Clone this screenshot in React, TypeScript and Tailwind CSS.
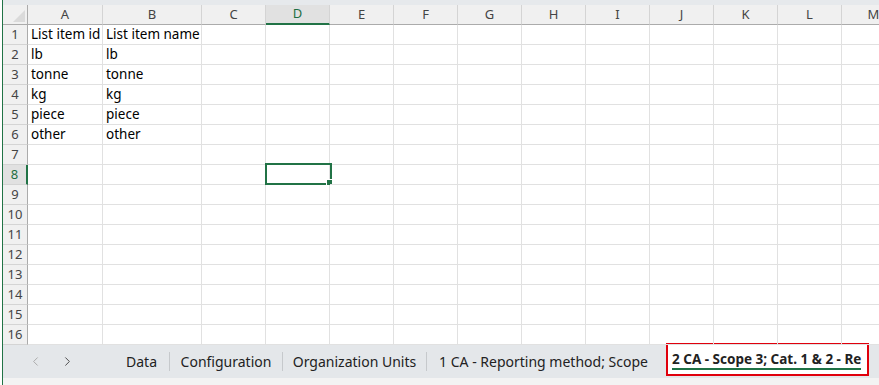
import { ChevronLeft, ChevronRight } from 'lucide-react';

const columns = ['A', 'B', 'C', 'D', 'E', 'F', 'G', 'H', 'I', 'J', 'K', 'L', 'M'];

const colWidth: Record<string, string> = {
    A: 'w-[75px]',
    B: 'w-[99px]',
};

const data: Record<number, [string, string]> = {
    1: ['List item id', 'List item name'],
    2: ['lb', 'lb'],
    3: ['tonne', 'tonne'],
    4: ['kg', 'kg'],
    5: ['piece', 'piece'],
    6: ['other', 'other'],
};

const rows = Array.from({ length: 16 }, (_, i) => i + 1);

const tabs = [
    { name: 'Data', w: 'w-[56px]' },
    { name: 'Configuration', w: 'w-[113px]' },
    { name: 'Organization Units', w: 'w-[144px]' },
    { name: '1 CA - Reporting method; Scope', w: 'w-[233px]' },
];

const font = { fontFamily: '"Noto Sans", "Open Sans", sans-serif' };

const HeaderRow: React.FC = () => (
    <div className="flex h-[20px] shrink-0">
        <div className="w-[25px] shrink-0 relative bg-[#f0f0f0] border-r border-b border-[#ababab]">
            <svg className="absolute right-[2px] bottom-[2px]" width="12" height="12" viewBox="0 0 12 12">
                <polygon points="12,0 12,12 0,12" fill="#dadada" />
            </svg>
        </div>
        {columns.map((c) => {
            const active = c === 'D';
            return (
                <div
                    key={c}
                    className={`${colWidth[c] ?? 'w-[64px]'} shrink-0 flex items-center justify-center text-[13px] border-r ${
                        active
                            ? 'bg-[#e1e1e1] text-[#1e6e42] border-b-2 border-b-[#217346] border-r-[#d4d4d4]'
                            : 'bg-[#f0f0f0] text-[#444] border-b border-b-[#ababab] border-r-[#d4d4d4]'
                    }`}
                >
                    {c}
                </div>
            );
        })}
    </div>
);

const SheetRow: React.FC<{ n: number }> = ({ n }) => {
    const active = n === 8;
    const values = data[n];
    return (
        <div className="flex h-[20px] shrink-0">
            <div
                className={`w-[25px] shrink-0 flex items-center justify-center text-[13px] border-b border-b-[#d4d4d4] ${
                    active
                        ? 'bg-[#e1e1e1] text-[#1e6e42] border-r-2 border-r-[#217346]'
                        : 'bg-[#f0f0f0] text-[#444] border-r border-r-[#ababab]'
                }`}
            >
                {n}
            </div>
            {columns.map((c, i) => (
                <div
                    key={c}
                    className={`${colWidth[c] ?? 'w-[64px]'} shrink-0 relative flex items-center pl-[3px] text-[13.5px] text-black whitespace-nowrap border-r border-b border-[#e1e1e1]`}
                >
                    {values && i < 2 ? values[i] : ''}
                    {active && c === 'D' && (
                        <div className="absolute -left-[1px] -top-[2px] w-[67px] h-[22px] border-2 border-[#217346]">
                            <div className="absolute -right-[3px] -bottom-[3px] w-[5px] h-[5px] bg-[#217346] border border-white box-content" />
                        </div>
                    )}
                </div>
            ))}
        </div>
    );
};

export default function App() {
    return (
        <div className="w-[879px] h-[385px] overflow-hidden bg-white flex" style={font}>
            <div className="w-[2px] shrink-0 bg-white" />
            <div className="w-[1px] shrink-0 bg-[#217346]" />
            <div className="flex-1 flex flex-col min-w-0">
                <div className="h-[5px] shrink-0 bg-[#e6e9ec]" />
                <div className="flex flex-col overflow-hidden">
                    <HeaderRow />
                    {rows.map((n) => (
                        <SheetRow key={n} n={n} />
                    ))}
                </div>
                <div className="h-[33px] shrink-0 flex items-center bg-[#e4e7ea] text-[14px] text-[#222]">
                    <div className="w-[111px] shrink-0 flex items-center pl-[25px] gap-[17px]">
                        <ChevronLeft size={15} strokeWidth={1.5} className="text-[#a6a6a6]" />
                        <ChevronRight size={15} strokeWidth={1.5} className="text-[#444]" />
                    </div>
                    {tabs.map((t, i) => (
                        <div key={t.name} className={`${t.w} shrink-0 h-[19px] flex items-center justify-center whitespace-nowrap ${i < tabs.length - 1 ? 'border-r border-[#c6c9cc]' : ''}`}>
                            {t.name}
                        </div>
                    ))}
                    <div className="w-[6px] shrink-0" />
                    <div className="w-[203px] shrink-0 h-[33px] -mt-[2px] self-start bg-white border-2 border-[#e0000c] overflow-hidden flex items-center pl-[4px]">
                        <span className="font-bold text-[13.5px] text-[#222] whitespace-nowrap border-b-2 border-[#1e7145] leading-[18px]">
                            2 CA - Scope 3; Cat. 1 &amp; 2 - Re
                        </span>
                    </div>
                </div>
                <div className="h-[7px] shrink-0 bg-[#f3f3f3]" />
            </div>
        </div>
    );
}
